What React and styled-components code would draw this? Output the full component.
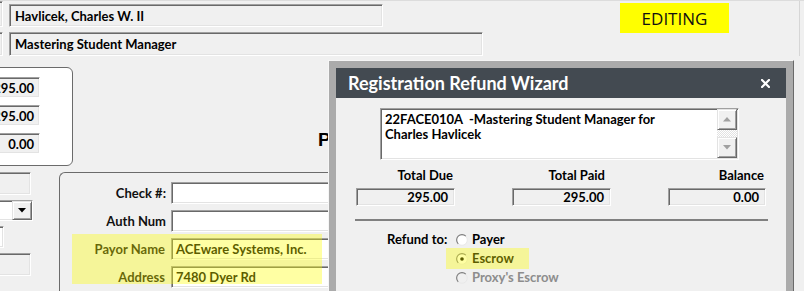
import styled, { createGlobalStyle } from 'styled-components';

const GlobalStyle = createGlobalStyle`
  html, body { margin: 0; padding: 0; background: #f0f0f0; }
  body { font-family: Lato, "Open Sans", "DejaVu Sans", sans-serif; color: #000; }
  * { box-sizing: border-box; }
`;

const sunken = `
  border: 1px solid;
  border-color: #a0a0a0 #ffffff #ffffff #a0a0a0;
  box-shadow: inset 1px 1px 0 #696969, inset -1px -1px 0 #e3e3e3;
`;

const raised = `
  border: 1px solid;
  border-color: #e3e3e3 #696969 #696969 #e3e3e3;
  box-shadow: inset 1px 1px 0 #ffffff, inset -1px -1px 0 #a0a0a0;
  background: #f0f0f0;
`;

const Screen = styled.div`
  position: relative;
  width: 804px;
  height: 291px;
  overflow: hidden;
  background: #f0f0f0;
  border-top: 1px solid #dcdcdc;
`;

const Header = styled.div`
  display: flex;
  flex-direction: column;
  width: 800px;
  border-right: 1px solid #d6d6d6;
`;

const Row = styled.div`
  display: flex;
  align-items: flex-start;
  height: ${({ $h }) => ($h ? `${$h}px` : 'auto')};
`;

const Field = styled.div`
  ${sunken}
  flex: none;
  width: ${({ $w }) => $w}px;
  height: ${({ $h }) => $h || 23}px;
  margin-left: ${({ $ml }) => $ml || 0}px;
  margin-top: ${({ $mt }) => $mt || 0}px;
  background: ${({ $bg }) => $bg || '#f0f0f0'};
  display: flex;
  align-items: center;
  justify-content: ${({ $right }) => ($right ? 'flex-end' : 'flex-start')};
  padding: 0 5px 0 ${({ $pl }) => $pl || 5}px;
  font-size: 13px;
  font-weight: 700;
  white-space: nowrap;
  overflow: hidden;
`;

const Editing = styled.div`
  flex: none;
  width: 109px;
  height: 30px;
  margin-left: 237px;
  margin-top: 2px;
  background: #ffff00;
  display: flex;
  align-items: center;
  justify-content: center;
  font-family: "Open Sans", sans-serif;
  font-size: 17px;
  color: #111;
`;

const AmountPanel = styled.div`
  flex: none;
  width: 83px;
  height: 99px;
  margin-left: -10px;
  margin-top: 11px;
  background: #fff;
  border: 1px solid #6b6b6b;
  border-radius: 0 6px 6px 0;
  display: flex;
  flex-direction: column;
  gap: 7px;
  padding-top: 9px;
`;

const BigLetter = styled.div`
  margin-left: 245px;
  margin-top: 74px;
  font-family: "Liberation Sans", Arial, sans-serif;
  font-size: 19px;
  font-weight: 700;
  line-height: 1;
`;

const LeftCol = styled.div`
  flex: none;
  width: 33px;
  display: flex;
  flex-direction: column;
  gap: 5px;
  padding-top: 6px;
`;

const Combo = styled.div`
  ${sunken}
  width: 53px;
  height: 21px;
  margin-left: -20px;
  background: #fff;
  display: flex;
  justify-content: flex-end;
`;

const DropBtn = styled.div`
  ${raised}
  width: 20px;
  height: 19px;
  display: flex;
  align-items: center;
  justify-content: center;
`;

const PaymentPanel = styled.div`
  flex: none;
  width: 360px;
  height: 130px;
  margin-left: 26px;
  margin-top: 6px;
  border: 1px solid #6b6b6b;
  border-right: none;
  border-bottom: none;
  border-top-left-radius: 6px;
  padding-top: 9px;
  display: grid;
  grid-template-columns: 106px 220px;
  grid-auto-rows: 22px;
  column-gap: 5px;
  row-gap: 6px;
`;

const FormLabel = styled.div`
  align-self: center;
  text-align: right;
  padding-right: ${({ $pr }) => $pr || 0}px;
  font-size: 13px;
  font-weight: 700;
  white-space: nowrap;
  color: #111;
`;

const Highlight = styled.div`
  position: absolute;
  left: ${({ $x }) => $x}px;
  top: ${({ $y }) => $y}px;
  width: ${({ $w }) => $w}px;
  height: ${({ $h }) => $h}px;
  background: rgba(255, 255, 0, 0.36);
  pointer-events: none;
`;

const Dialog = styled.div`
  position: absolute;
  left: 328px;
  top: 59px;
  width: 466px;
  height: 240px;
  border: 1px solid;
  border-color: #f6f6f6 #6a6a6a #6a6a6a #f6f6f6;
  background: #ababab;
  padding: 7px 7px 0 7px;
  display: flex;
  flex-direction: column;
`;

const TitleBar = styled.div`
  flex: none;
  height: 30px;
  background: #434a51;
  display: flex;
  align-items: center;
  justify-content: space-between;
  padding: 0 16px 0 12px;
`;

const Title = styled.div`
  color: #fff;
  font-size: 18px;
  font-weight: 700;
`;

const DialogBody = styled.div`
  flex: 1;
  background: #f0f0f0;
  display: flex;
  flex-direction: column;
  padding-top: 10px;
`;

const TextBox = styled.div`
  ${sunken}
  width: 359px;
  height: 52px;
  margin-left: 44px;
  background: #fff;
  display: flex;
`;

const TextContent = styled.div`
  flex: 1;
  padding: 3px 4px;
  font-size: 13px;
  font-weight: 700;
  line-height: 15px;
  white-space: pre;
`;

const ScrollBar = styled.div`
  flex: none;
  width: 20px;
  display: flex;
  flex-direction: column;
  margin: 0 1px 1px 0;
`;

const ScrollBtn = styled.div`
  ${raised}
  flex: none;
  height: 21px;
  display: flex;
  align-items: center;
  justify-content: center;
`;

const ScrollTrack = styled.div`
  flex: 1;
  background: repeating-conic-gradient(#ffffff 0 25%, #e2e2e2 0 50%) 0 0 / 2px 2px;
`;

const Totals = styled.div`
  display: grid;
  grid-template-columns: 99px 99px 98px;
  column-gap: 57px;
  row-gap: 5px;
  margin-left: 20px;
  margin-top: 7px;
`;

const TotalLabel = styled.div`
  text-align: right;
  padding-right: ${({ $pr }) => $pr}px;
  font-size: 13px;
  font-weight: 700;
  line-height: 16px;
`;

const TotalValue = styled.div`
  ${sunken}
  height: 18px;
  display: flex;
  align-items: center;
  justify-content: flex-end;
  padding-right: 6px;
  font-size: 13px;
  font-weight: 700;
`;

const Separator = styled.div`
  width: 413px;
  height: 2px;
  margin-left: 19px;
  margin-top: 13px;
  background: #808080;
`;

const RefundRow = styled.div`
  display: flex;
  margin-top: 8px;
`;

const RefundLabel = styled.div`
  width: 69px;
  margin-left: 51px;
  height: 19px;
  display: flex;
  align-items: center;
  font-size: 13px;
  font-weight: 700;
`;

const RadioList = styled.div`
  display: flex;
  flex-direction: column;
`;

const RadioItem = styled.div`
  position: relative;
  height: 19px;
  display: flex;
  align-items: center;
  gap: 4px;
  font-size: 13px;
  font-weight: 700;
  color: ${({ $disabled }) => ($disabled ? '#8d8d8d' : '#000')};
`;

const Radio = ({ checked, disabled }) => (
  <svg width="12" height="12" viewBox="0 0 12 12" style={{ marginTop: 2 }}>
    <circle cx="6" cy="6" r="5.3" fill={disabled ? '#f0f0f0' : '#fff'} stroke="#e8e8e8" strokeWidth="1" />
    <path d="M2.2 9.8 A5.3 5.3 0 0 1 9.8 2.2" fill="none" stroke="#7d7d7d" strokeWidth="1.1" />
    {checked && <circle cx="6" cy="6" r="1.8" fill="#000" />}
  </svg>
);

const Arrow = ({ down, color }) => (
  <svg width="8" height="5" viewBox="0 0 8 5">
    <path d={down ? 'M0 0 H8 L4 4.5 Z' : 'M0 4.5 H8 L4 0 Z'} fill={color} />
  </svg>
);

function App() {
  return (
    <Screen>
      <GlobalStyle />
      <Header>
        <Row $h={31}>
          <Field $w={23} $h={26} $ml={-20} />
          <Field $w={374} $ml={6} $mt={3}>Havlicek, Charles W. II</Field>
          <Editing>EDITING</Editing>
        </Row>
        <Row $h={24}>
          <Field $w={23} $h={24} $ml={-20} />
          <Field $w={474} $h={24} $ml={6}>Mastering Student Manager</Field>
        </Row>
      </Header>

      <Row $h={110}>
        <AmountPanel>
          <Field $w={49} $h={21} $right>295.00</Field>
          <Field $w={49} $h={21} $right>295.00</Field>
          <Field $w={49} $h={21} $right>0.00</Field>
        </AmountPanel>
        <BigLetter>P</BigLetter>
      </Row>

      <Row>
        <LeftCol>
          <Field $w={51} $h={23} $ml={-20} />
          <Combo>
            <DropBtn><Arrow down color="#000" /></DropBtn>
          </Combo>
          <Field $w={24} $h={22} $ml={-20} $bg="#fff" />
          <Field $w={51} $h={23} $ml={-20} />
        </LeftCol>
        <PaymentPanel>
          <FormLabel>Check #:</FormLabel>
          <Field $w={220} $h={22} $bg="#fff" />
          <FormLabel>Auth Num</FormLabel>
          <Field $w={220} $h={22} $bg="#fff" />
          <FormLabel $pr={1}>Payor Name</FormLabel>
          <Field $w={220} $h={22} $bg="#fff" $pl={4}>ACEware Systems, Inc.</Field>
          <FormLabel $pr={1}>Address</FormLabel>
          <Field $w={220} $h={22} $bg="#fff" $pl={4}>7480 Dyer Rd</Field>
        </PaymentPanel>
      </Row>

      <Highlight $x={72} $y={233} $w={250} $h={50} />

      <Dialog>
        <TitleBar>
          <Title>Registration Refund Wizard</Title>
          <svg width="9" height="9" viewBox="0 0 9 9">
            <path d="M1 1 L8 8 M8 1 L1 8" stroke="#fff" strokeWidth="2.2" strokeLinecap="square" />
          </svg>
        </TitleBar>
        <DialogBody>
          <TextBox>
            <TextContent>{'22FACE010A  -Mastering Student Manager for\nCharles Havlicek'}</TextContent>
            <ScrollBar>
              <ScrollBtn><Arrow color="#a0a0a0" /></ScrollBtn>
              <ScrollTrack />
              <ScrollBtn><Arrow down color="#a0a0a0" /></ScrollBtn>
            </ScrollBar>
          </TextBox>

          <Totals>
            <TotalLabel $pr={2}>Total Due</TotalLabel>
            <TotalLabel $pr={6}>Total Paid</TotalLabel>
            <TotalLabel $pr={2}>Balance</TotalLabel>
            <TotalValue>295.00</TotalValue>
            <TotalValue>295.00</TotalValue>
            <TotalValue>0.00</TotalValue>
          </Totals>

          <Separator />

          <RefundRow>
            <RefundLabel>Refund to:</RefundLabel>
            <RadioList>
              <RadioItem><Radio />Payer</RadioItem>
              <RadioItem>
                <Radio checked />Escrow
                <Highlight $x={-10} $y={0} $w={83} $h={21} />
              </RadioItem>
              <RadioItem $disabled><Radio disabled />Proxy's Escrow</RadioItem>
            </RadioList>
          </RefundRow>
        </DialogBody>
      </Dialog>
    </Screen>
  );
}

export default App;
